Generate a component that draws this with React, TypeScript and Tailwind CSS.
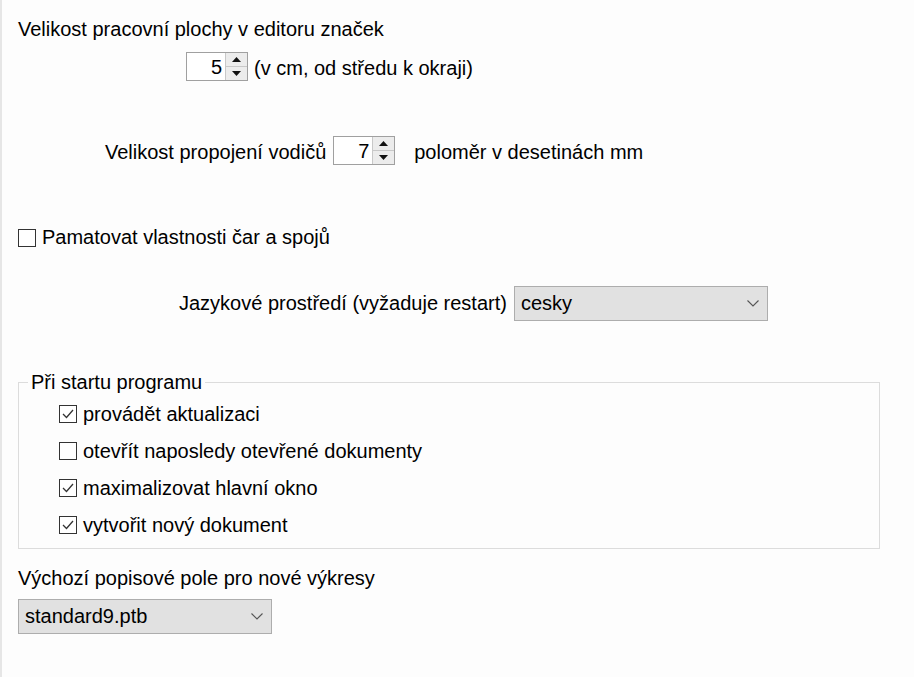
import React from "react";

const font = { fontFamily: '"Liberation Sans", Arial, sans-serif' };

const SpinBox = ({ value }: { value: string }) => (
  <div className="flex h-[29px] w-[62px] border border-[#a0a0a0] bg-white">
    <div className="flex flex-1 items-center justify-end pr-[3px] text-[20px] leading-none">
      {value}
    </div>
    <div className="flex w-[22px] flex-col border-l border-[#c8c8c8] bg-[#ececec]">
      <div className="flex flex-1 items-center justify-center border-b border-[#c8c8c8]">
        <svg width="9" height="5" viewBox="0 0 9 5">
          <path d="M0 5 L4.5 0 L9 5 Z" fill="#111" />
        </svg>
      </div>
      <div className="flex flex-1 items-center justify-center">
        <svg width="9" height="5" viewBox="0 0 9 5">
          <path d="M0 0 L4.5 5 L9 0 Z" fill="#111" />
        </svg>
      </div>
    </div>
  </div>
);

const CheckBox = ({ checked }: { checked: boolean }) => (
  <div className="flex h-[18px] w-[18px] shrink-0 items-center justify-center border border-[#333] bg-white">
    {checked && (
      <svg width="14" height="14" viewBox="0 0 14 14">
        <path d="M2 7 L5.5 10.5 L12 3" fill="none" stroke="#333" strokeWidth="1.3" />
      </svg>
    )}
  </div>
);

const Select = ({ value }: { value: string }) => (
  <div className="flex h-[35px] w-[254px] items-center justify-between border border-[#adadad] bg-[#e1e1e1] pl-[6px] pr-[8px] text-[20px]">
    <span>{value}</span>
    <svg width="12" height="7" viewBox="0 0 12 7">
      <path d="M0.5 0.5 L6 6 L11.5 0.5" fill="none" stroke="#555" strokeWidth="1.1" />
    </svg>
  </div>
);

const startItems = [
  { label: "provádět aktualizaci", checked: true },
  { label: "otevřít naposledy otevřené dokumenty", checked: false },
  { label: "maximalizovat hlavní okno", checked: true },
  { label: "vytvořit nový dokument", checked: true },
];

export default function App() {
  return (
    <div
      className="h-[677px] w-[914px] border-l-2 border-[#e6e6e6] bg-[#fdfdfd] pl-[16px] pt-[18px] text-[20px] leading-[23px] text-black"
      style={font}
    >
      <div>Velikost pracovní plochy v editoru značek</div>

      <div className="ml-[168px] mt-[11px] flex items-center gap-[6px]">
        <SpinBox value="5" />
        <span className="mt-[4px]">(v cm, od středu k okraji)</span>
      </div>

      <div className="ml-[87px] mt-[55px] flex items-center">
        <span className="mt-[4px]">Velikost propojení vodičů</span>
        <div className="ml-[7px]">
          <SpinBox value="7" />
        </div>
        <span className="ml-[19px] mt-[4px]">poloměr v desetinách mm</span>
      </div>

      <div className="mt-[61px] flex items-center gap-[6px]">
        <CheckBox checked={false} />
        <span>Pamatovat vlastnosti čar a spojů</span>
      </div>

      <div className="ml-[161px] mt-[37px] flex items-center gap-[7px]">
        <span>Jazykové prostředí (vyžaduje restart)</span>
        <Select value="cesky" />
      </div>

      <fieldset className="mt-[50px] w-[862px] border border-[#dcdcdc] px-[9px] pb-[11px]">
        <legend className="px-[3px]">Při startu programu</legend>
        <div className="ml-[31px] mt-[8px] flex flex-col gap-[13px]">
          {startItems.map((item) => (
            <div key={item.label} className="flex h-[24px] items-center gap-[6px]">
              <CheckBox checked={item.checked} />
              <span>{item.label}</span>
            </div>
          ))}
        </div>
      </fieldset>

      <div className="mt-[18px]">Výchozí popisové pole pro nové výkresy</div>
      <div className="mt-[9px]">
        <Select value="standard9.ptb" />
      </div>
    </div>
  );
}
